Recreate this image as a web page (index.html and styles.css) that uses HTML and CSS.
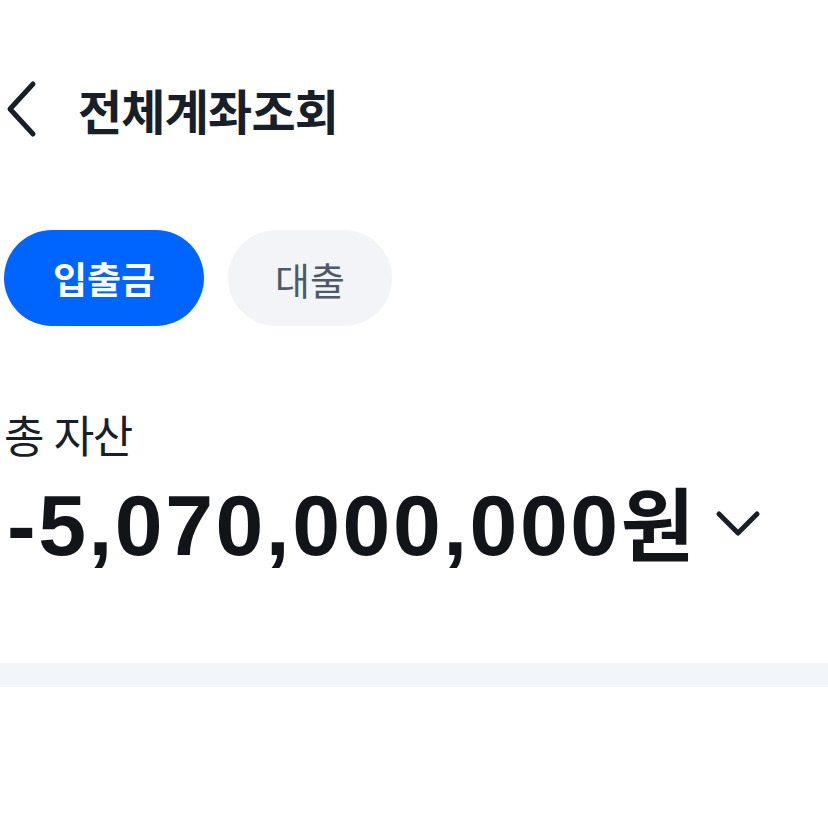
FILE: index.html
```html
<!DOCTYPE html>
<html lang="ko">
<head>
<meta charset="utf-8">
<link rel="stylesheet" href="styles.css">
</head>
<body>
<div class="page">
  <header class="header">
    <button class="back" aria-label="뒤로">
      <svg width="36" height="58" viewBox="0 0 36 58"><path d="M31 4 L8 29 L31 54" fill="none" stroke="#191f28" stroke-width="5" stroke-linecap="round" stroke-linejoin="round"/></svg>
    </button>
    <h1 class="title">전체계좌조회</h1>
  </header>
  <div class="tabs">
    <span class="tab tab-active">입출금</span>
    <span class="tab">대출</span>
  </div>
  <div class="summary">
    <div class="label">총 자산</div>
    <div class="amount-row">
      <span class="amount">-5,070,000,000<span class="won">원</span></span>
      <svg class="chev" width="48" height="32" viewBox="0 0 48 32"><path d="M5 7 L24 26 L43 7" fill="none" stroke="#191f28" stroke-width="5" stroke-linecap="round" stroke-linejoin="round"/></svg>
    </div>
  </div>
  <div class="band"></div>
</div>
</body>
</html>
```
FILE: styles.css
```css
html, body { margin: 0; padding: 0; background: #fff; }
body { font-family: "Noto Sans CJK KR", "Noto Sans", sans-serif; color: #191f28; }
.page { width: 828px; }
.header { display: flex; align-items: center; height: 58px; margin-top: 80px; padding-left: 2px; }
.back { border: 0; background: none; padding: 0; width: 36px; height: 58px; display: block; }
.back svg { display: block; }
.title { margin: 0 0 0 40px; font-size: 48px; font-weight: 700; letter-spacing: -0.8px; line-height: 58px; }
.tabs { display: flex; gap: 24px; margin-top: 92px; padding-left: 4px; }
.tab { display: flex; align-items: center; justify-content: center; height: 96px; border-radius: 48px; background: #f2f4f8; color: #4e5968; font-size: 38px; font-weight: 400; box-sizing: border-box; }
.tab-active { background: #0064ff; color: #fff; font-weight: 700; width: 200px; font-size: 37px; }
.tab:not(.tab-active) { width: 164px; }
.summary { padding-left: 4px; margin-top: 84px; }
.label { font-size: 44px; letter-spacing: -1.5px; line-height: 48px; font-weight: 400; }
.amount-row { display: flex; align-items: center; margin-top: 12px; }
.amount { font-family: "Liberation Sans", Arial, sans-serif; font-weight: 700; font-size: 86px; line-height: 100px; letter-spacing: 2.5px; color: #111418; padding-left: 3px; }
.won { font-family: "Noto Sans CJK KR", sans-serif; font-size: 80px; letter-spacing: 0; margin-left: 0; }
.chev { margin-left: 20px; display: block; }
.band { height: 24px; background: #f2f5fa; margin-top: 88px; }
```
